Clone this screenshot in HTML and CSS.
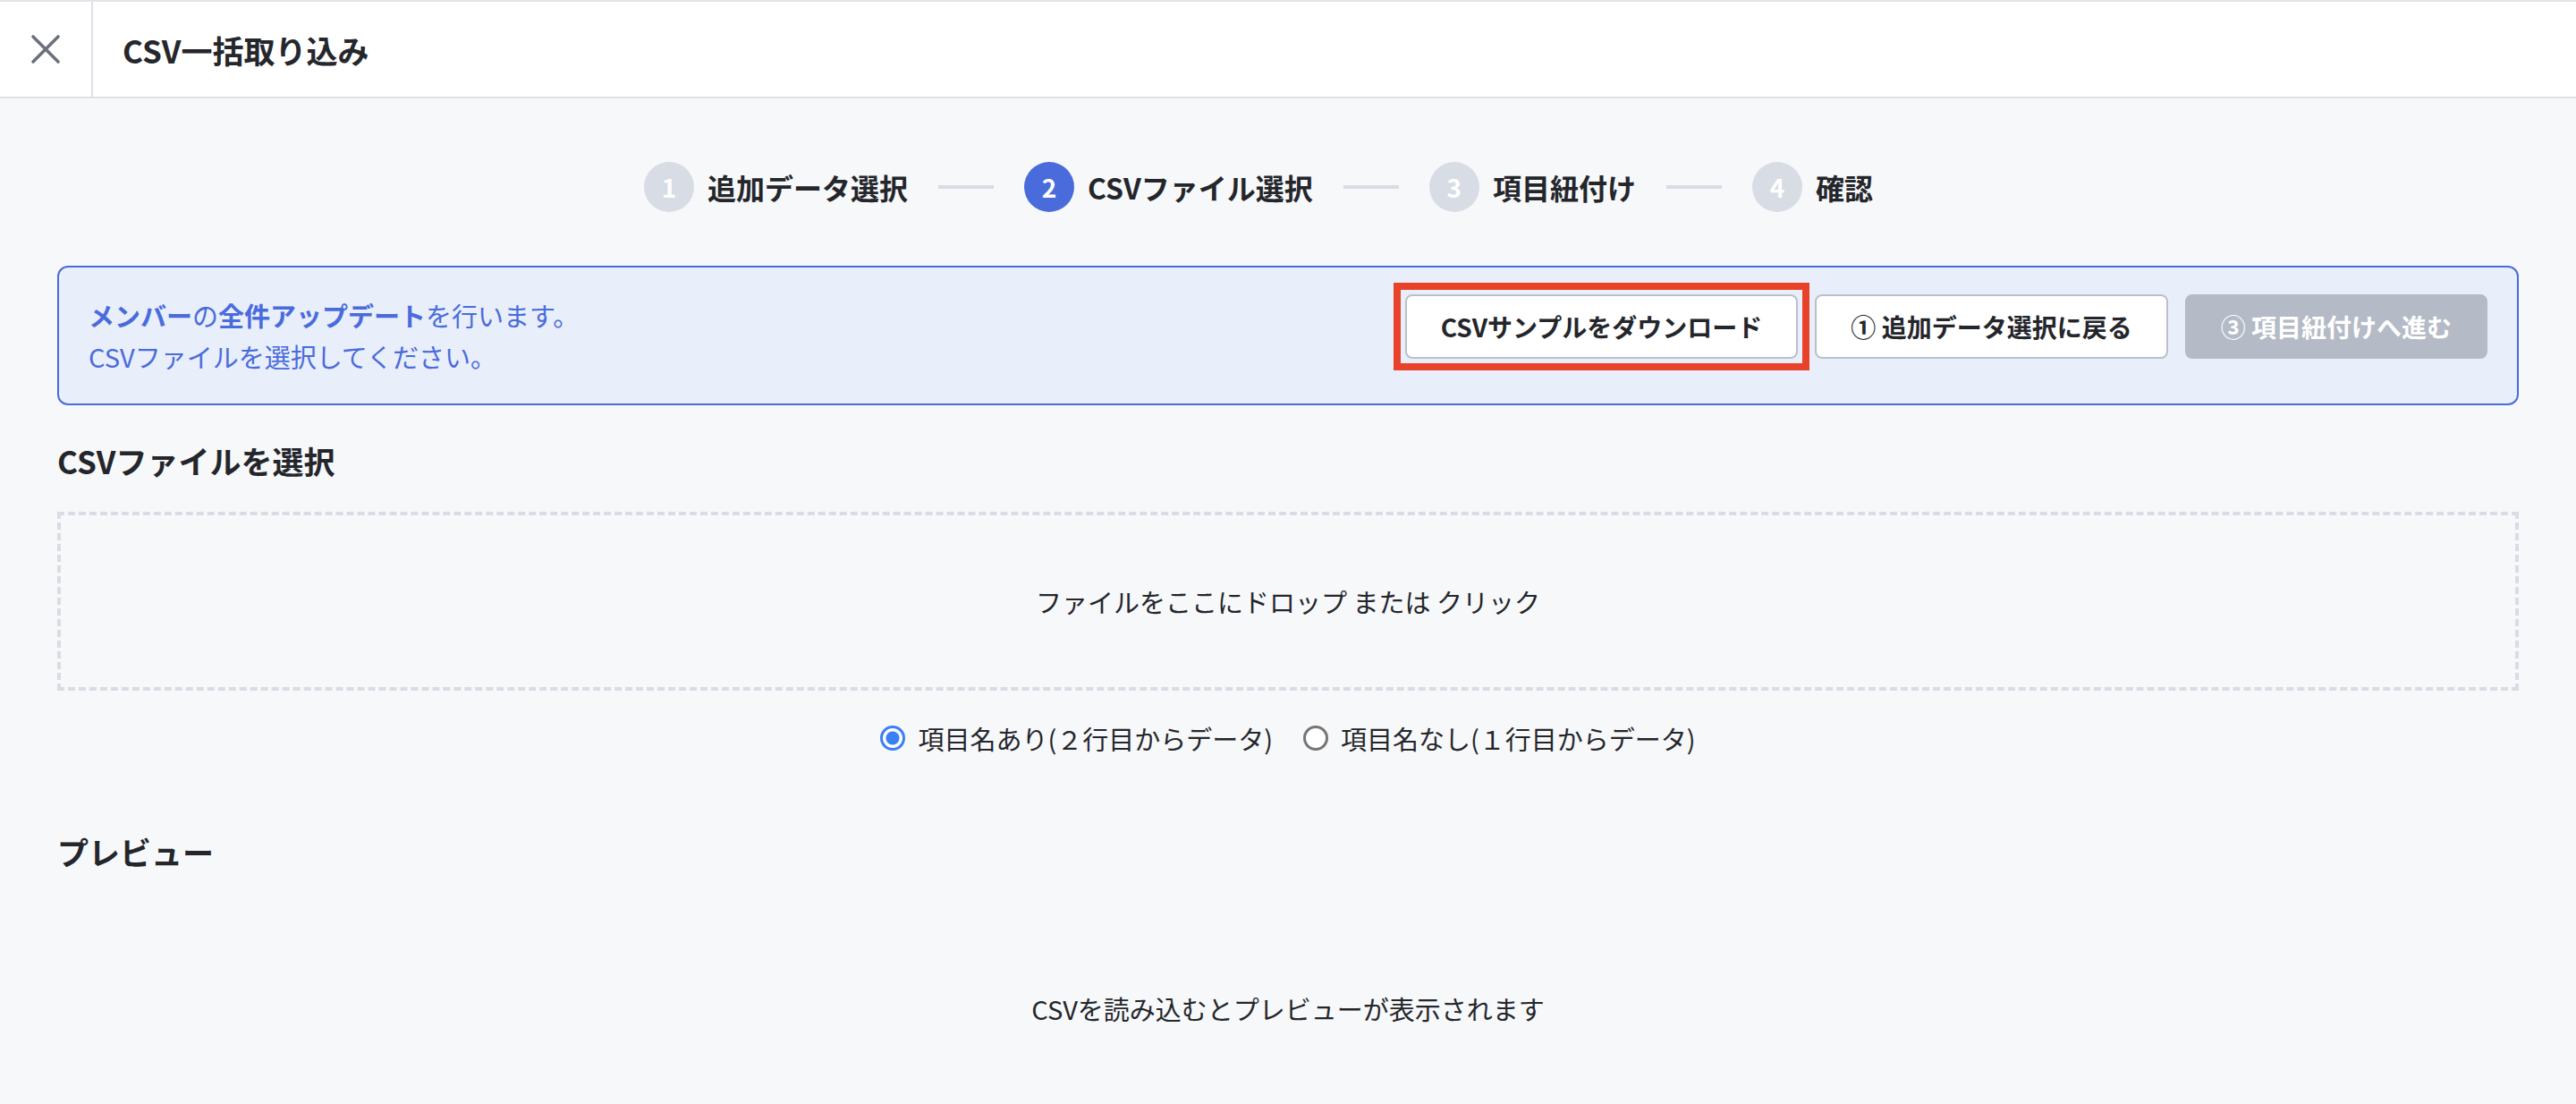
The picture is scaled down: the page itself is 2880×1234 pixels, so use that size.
FILE: index.html
```html
<!DOCTYPE html>
<html lang="ja">
<head>
    <meta charset="UTF-8">
    <meta name="viewport" content="width=device-width, initial-scale=1.0">
    <title>CSV一括取り込み</title>
    <link rel="stylesheet" href="styles.css">
</head>
<body>
    <header class="topbar">
        <button class="close-btn" aria-label="閉じる">
            <svg width="34" height="34" viewBox="0 0 34 34" fill="none" stroke="#6b717c" stroke-width="3.6" stroke-linecap="round">
                <path d="M3 3 L31 31 M31 3 L3 31"/>
            </svg>
        </button>
        <h1 class="title">CSV一括取り込み</h1>
    </header>

    <main class="content">
        <ol class="steps">
            <li class="step"><span class="step-num">1</span><span class="step-label">追加データ選択</span></li>
            <li class="step-line"></li>
            <li class="step active"><span class="step-num">2</span><span class="step-label">CSVファイル選択</span></li>
            <li class="step-line"></li>
            <li class="step"><span class="step-num">3</span><span class="step-label">項目紐付け</span></li>
            <li class="step-line"></li>
            <li class="step"><span class="step-num">4</span><span class="step-label">確認</span></li>
        </ol>

        <div class="notice">
            <div class="notice-text">
                <p><b>メンバー</b>の<b>全件アップデート</b>を行います。</p>
                <p>CSVファイルを選択してください。</p>
            </div>
            <div class="notice-actions">
                <span class="highlight"><button class="btn">CSVサンプルをダウンロード</button></span>
                <button class="btn">① 追加データ選択に戻る</button>
                <button class="btn disabled" disabled>③ 項目紐付けへ進む</button>
            </div>
        </div>

        <h2 class="section-title">CSVファイルを選択</h2>
        <div class="dropzone">ファイルをここにドロップ または クリック</div>

        <div class="radio-row">
            <label class="radio"><input type="radio" name="header" checked>項目名あり(２行目からデータ)</label>
            <label class="radio"><input type="radio" name="header">項目名なし(１行目からデータ)</label>
        </div>

        <h2 class="section-title preview-title">プレビュー</h2>
        <p class="preview-empty">CSVを読み込むとプレビューが表示されます</p>
    </main>
</body>
</html>
```
FILE: styles.css
```css
body {
    margin: 0;
    background: #f7f8fa;
    font-family: "Noto Sans CJK JP", "Noto Sans", sans-serif;
    color: #24262b;
    min-height: 100vh;
}
.topbar {
    display: flex;
    align-items: center;
    height: 106px;
    background: #fff;
    border-top: 2px solid #e3e5ea;
    border-bottom: 2px solid #dde1e8;
}
.close-btn {
    width: 104px;
    height: 100%;
    display: flex;
    align-items: center;
    justify-content: center;
    background: none;
    border: none;
    border-right: 2px solid #dde1e8;
    padding: 0;
    cursor: pointer;
}
.title {
    margin: 0 0 0 33px;
    font-size: 35px;
    font-weight: 700;
    color: #25272c;
}
.content {
    padding: 71px 64px 0;
}
.steps {
    list-style: none;
    margin: 0;
    padding: 0 66px 0 0;
    display: flex;
    align-items: center;
    justify-content: center;
    height: 56px;
}
.step {
    display: flex;
    align-items: center;
    gap: 15px;
}
.step-num {
    width: 56px;
    height: 56px;
    border-radius: 50%;
    background: #d8dce4;
    color: #fff;
    font-size: 28px;
    font-weight: 700;
    display: flex;
    align-items: center;
    justify-content: center;
}
.step.active .step-num {
    background: #4a6bdc;
}
.step-label {
    font-size: 32px;
    font-weight: 700;
    color: #24262b;
}
.step-line {
    width: 62px;
    height: 4px;
    background: #d8dce4;
    margin: 0 34px;
}
.notice {
    margin-top: 60px;
    display: flex;
    justify-content: space-between;
    align-items: flex-start;
    padding: 30px 33px;
    background: #e8eefa;
    border: 2px solid #4a6bdc;
    border-radius: 12px;
    color: #4a6bdc;
}
.notice-text p {
    margin: 0;
    font-size: 29px;
    line-height: 46px;
}
.notice-actions {
    display: flex;
    gap: 19px;
}
.btn {
    font-family: inherit;
    font-size: 28px;
    font-weight: 700;
    line-height: 40px;
    padding: 14px 38px;
    background: #fff;
    color: #24262b;
    border: 2px solid #b9c0cc;
    border-radius: 8px;
    cursor: pointer;
}
.highlight {
    display: flex;
    outline: 8px solid #e8422b;
    outline-offset: 5px;
}
.btn.disabled {
    background: #b4bac6;
    border-color: #b4bac6;
    color: #fff;
    cursor: default;
}
.section-title {
    margin: 35px 0 0;
    font-size: 35px;
    line-height: 54px;
    font-weight: 700;
}
.dropzone {
    margin-top: 30px;
    height: 192px;
    border: 4px dashed #d8dce4;
    display: flex;
    align-items: center;
    justify-content: center;
    font-size: 29px;
    color: #24262b;
}
.radio-row {
    margin-top: 33px;
    display: flex;
    justify-content: center;
    gap: 34px;
    font-size: 29px;
    line-height: 40px;
}
.radio {
    display: flex;
    align-items: center;
    gap: 14px;
}
.radio input {
    appearance: none;
    width: 28px;
    height: 28px;
    margin: 0;
    border-radius: 50%;
    border: 3px solid #767676;
    background: #fff;
}
.radio input:checked {
    border-color: #3b7ff5;
    background: radial-gradient(circle, #3b7ff5 0 7px, #fff 8px);
}
.preview-title {
    margin-top: 80px;
}
.preview-empty {
    margin: 128px 0 0;
    text-align: center;
    font-size: 29px;
    line-height: 40px;
}
```
